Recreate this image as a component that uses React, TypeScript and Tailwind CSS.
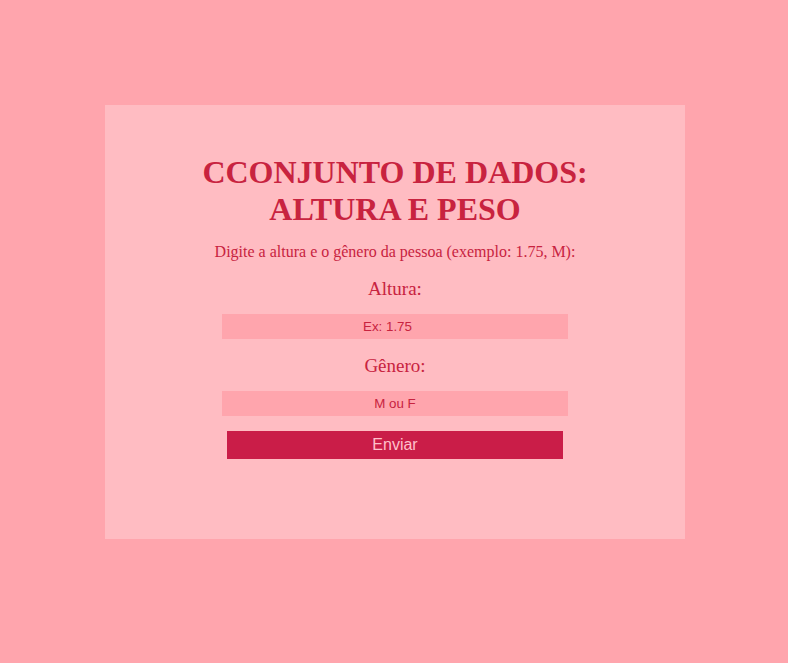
export default function App() {
  return (
    <div className="min-h-[663px] w-full bg-[#ffa5ad] pt-[105px] pl-[105px]">
      <div className="w-[580px] h-[434px] bg-[#ffbcc2] flex flex-col items-center pt-[49px] font-['Liberation_Serif',serif] text-[#c8233f]">
        <h1 className="w-[440px] text-center text-[32px] font-bold leading-[37px]">
          CCONJUNTO DE DADOS: ALTURA E PESO
        </h1>
        <p className="mt-[15px] text-base leading-[18px] text-[#c8233f]">
          Digite a altura e o gênero da pessoa (exemplo: 1.75, M):
        </p>
        <label className="mt-[17px] text-[19px] leading-[22px]">Altura:</label>
        <input
          type="number"
          placeholder="Ex: 1.75"
          className="mt-[14px] w-[346px] h-[25px] bg-[#ffa5ad] text-center font-['Liberation_Sans',sans-serif] text-[13.33px] text-[#c8233f] placeholder:text-[#c8233f] outline-none"
        />
        <label className="mt-[16px] text-[19px] leading-[22px]">Gênero:</label>
        <input
          type="text"
          placeholder="M ou F"
          className="mt-[14px] w-[346px] h-[25px] bg-[#ffa5ad] text-center font-['Liberation_Sans',sans-serif] text-[13.33px] text-[#c8233f] placeholder:text-[#c8233f] outline-none"
        />
        <button
          type="button"
          className="mt-[15px] w-[336px] h-[28px] bg-[#ca1d48] text-[#ffc0cb] font-['Liberation_Sans',sans-serif] text-base"
        >
          Enviar
        </button>
      </div>
    </div>
  )
}
